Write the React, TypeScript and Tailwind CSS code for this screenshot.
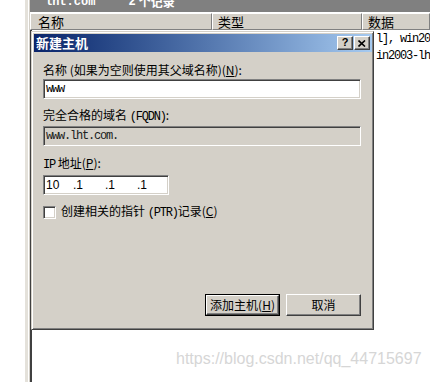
import React from "react";

const cjk = "font-['Noto_Sans_CJK_SC','Noto_Sans_CJK_SC',sans-serif]";
const mono = "font-['Liberation_Mono',monospace] tracking-[-1.2px]";

function Raised({ children, className = "" }: { children?: React.ReactNode; className?: string }) {
  return (
    <div
      className={
        "border border-t-white border-l-white border-r-[#404040] border-b-[#404040] shadow-[inset_-1px_-1px_0_#808080] bg-[#d4d0c8] " +
        className
      }
    >
      {children}
    </div>
  );
}

function Sunken({ children, className = "" }: { children?: React.ReactNode; className?: string }) {
  return (
    <div
      className={
        "border border-t-[#808080] border-l-[#808080] border-r-white border-b-white shadow-[inset_1px_1px_0_#404040,inset_-1px_-1px_0_#d4d0c8] " +
        className
      }
    >
      {children}
    </div>
  );
}

export default function App() {
  return (
    <div className={"relative w-[430px] h-[382px] overflow-hidden bg-white flex text-[12px] text-black " + cjk}>
      <div className="w-[25px] bg-white" />
      <div className="w-[3px] bg-[#e4e1da]" />
      <div className="w-[1px] bg-white" />
      <div className="w-[1px] bg-[#d4d0c8]" />
      <div className="flex-1 flex flex-col min-w-0">
        {/* top dark bar */}
        <div className="h-[12px] bg-[#808080] overflow-hidden flex items-start pl-[15px]">
          <div className="flex items-center mt-[-5px] text-white font-bold leading-[14px]">
            <span className={"font-['Liberation_Mono',monospace] text-[12px]"}>lht.com</span>
            <span className="ml-[33px] font-['Liberation_Mono',monospace]">2</span>
            <span className="ml-[3px]">个记录</span>
          </div>
        </div>
        <div className="h-[1px] bg-white" />
        {/* header */}
        <div className="flex h-[17px] bg-[#d4d0c8] leading-[15px]">
          <div className="w-[182px] border border-t-white border-l-white border-r-[#808080] border-b-[#808080] pl-[7px] text-[13px]">
            名称
          </div>
          <div className="w-[150px] border border-t-white border-l-white border-r-[#808080] border-b-[#808080] pl-[5px] text-[13px]">
            类型
          </div>
          <div className="flex-1 border border-t-white border-l-white border-r-[#808080] border-b-[#808080] pl-[5px] text-[13px]">
            数据
          </div>
        </div>
        {/* list body */}
        <div className="flex-1 bg-white border-l-2 border-l-[#404040] flex flex-col pt-[1px]">
          <div className="flex h-[17px] leading-[17px]">
            <div className="w-[180px]" />
            <div className="w-[150px]" />
            <div className={"flex-1 pl-[14px] whitespace-nowrap overflow-hidden text-[12px] " + mono}>l], win2003-lht.lht.com.</div>
          </div>
          <div className="flex h-[17px] leading-[17px]">
            <div className="w-[180px]" />
            <div className="w-[150px]" />
            <div className={"flex-1 pl-[14px] whitespace-nowrap overflow-hidden text-[12px] " + mono}>in2003-lht.lht.com.</div>
          </div>
        </div>
      </div>

      {/* dialog window */}
      <div className="absolute left-[31px] top-[31px] w-[343px] h-[299px] bg-[#d4d0c8] border border-t-[#d4d0c8] border-l-[#d4d0c8] border-r-[#404040] border-b-[#404040] shadow-[inset_1px_1px_0_#ffffff,inset_-1px_-1px_0_#808080] p-[1px] flex flex-col">
        <div className="h-[18px] mt-[1px] ml-[1px] bg-linear-to-r from-[#0a246a] to-[#a6caf0] flex items-center justify-between">
          <span className="pl-[2px] text-white font-bold text-[13px] leading-[16px]">新建主机</span>
          <div className="flex mr-[2px]">
            <Raised className="w-[16px] h-[14px] flex items-center justify-center">
              <span className="font-['Liberation_Sans',sans-serif] font-bold text-[11px] leading-[11px] mt-[-1px]">?</span>
            </Raised>
            <Raised className="w-[16px] h-[14px] ml-[1px] flex items-center justify-center">
              <svg width="8" height="7" viewBox="0 0 8 7">
                <path d="M0.5 0.5 L7 6.5 M7 0.5 L0.5 6.5" stroke="#000" strokeWidth="1.6" />
              </svg>
            </Raised>
          </div>
        </div>

        <div className="flex-1 flex flex-col pl-[10px] pr-[11px] pb-[12px]">
          <div className="mt-[11px] leading-[14px]">
            名称 (如果为空则使用其父域名称)(<span className="underline">N</span>):
          </div>
          <Sunken className="mt-[2px] h-[20px] bg-white flex items-center pl-[2px]">
            <span className={"text-[12px] " + mono}>www</span>
          </Sunken>

          <div className="mt-[9px] leading-[14px]">
            完全合格的域名 <span className={mono}>(FQDN)</span>:
          </div>
          <Sunken className="mt-[2px] h-[20px] bg-[#d4d0c8] flex items-center pl-[2px]">
            <span className={"text-[12px] text-[#202020] " + mono}>www.lht.com.</span>
          </Sunken>

          <div className="mt-[10px] leading-[14px]">
            <span className={mono}>IP</span> 地址(<span className="underline">P</span>):
          </div>
          <Sunken className="mt-[3px] h-[20px] w-[126px] bg-white flex items-center pl-[2px] font-['Liberation_Sans',sans-serif] text-[12px]">
            <span className="w-[27px]">10</span>
            <span className="w-[32px]">.1</span>
            <span className="w-[32px]">.1</span>
            <span>.1</span>
          </Sunken>

          <div className="mt-[9px] flex items-center">
            <Sunken className="w-[13px] h-[13px] bg-white" />
            <span className="ml-[5px] leading-[14px]">
              创建相关的指针 <span className={mono}>(PTR)</span>记录(<span className="underline">C</span>)
            </span>
          </div>

          <div className="mt-auto flex justify-end gap-[6px]">
            <div className="border border-black">
              <Raised className="w-[73px] h-[20px] flex items-center justify-center leading-[14px]">
                添加主机(<span className="underline">H</span>)
              </Raised>
            </div>
            <Raised className="w-[75px] h-[22px] flex items-center justify-center leading-[14px]">取消</Raised>
          </div>
        </div>
      </div>

      {/* watermark */}
      <div className="absolute left-[176px] top-[350px] text-[16px] leading-[18px] text-[#d6d6d6] font-['Liberation_Sans',sans-serif] whitespace-nowrap">
        https://blog.csdn.net/qq_44715697
      </div>
    </div>
  );
}
